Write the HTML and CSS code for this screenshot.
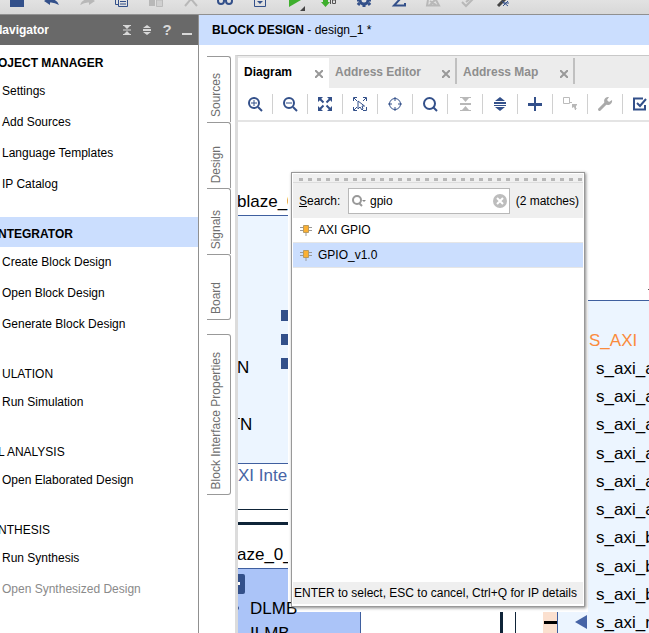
FILE: index.html
```html
<!DOCTYPE html>
<html lang="en">
<head>
<meta charset="utf-8">
<title>Block Design</title>
<link rel="stylesheet" href="styles.css">
</head>
<body>
<div class="app">
  <div class="main-toolbar" role="toolbar" aria-label="Main">
    <div class="main-tools">
      <button aria-label="Save"><svg width="20" height="14" viewBox="0 0 20 14"><path class="navy" d="M3 0h14v7H3z"/></svg></button>
      <button aria-label="Undo"><svg width="20" height="14" viewBox="0 0 20 14"><path class="navy" d="M2 1 8 -3V-1Q15-1 17 5Q12 2 8 2.500V5z"/></svg></button>
      <button aria-label="Redo"><svg width="20" height="14" viewBox="0 0 20 14"><path class="pale" d="M18 1 12 -3V-1Q5-1 3 5Q8 2 12 2.500V5z"/></svg></button>
      <button aria-label="Copy"><svg width="20" height="14" viewBox="0 0 20 14"><path class="line" d="M4.500 0v4.500H7M7.500-1v7.500h9V-1M9 1.500h6M9 4h6"/></svg></button>
      <button aria-label="Paste"><svg width="20" height="14" viewBox="0 0 20 14"><path class="pale" d="M3 0h6v6H3z"/><path d="M10.500 0h6v6.500h-6z" fill="#d0d0d0" stroke="#bbb"/></svg></button>
      <button aria-label="Delete"><svg width="20" height="14" viewBox="0 0 20 14"><path d="M4 6 10-1 16 6" fill="none" stroke="#b8b8b8" stroke-width="2"/></svg></button>
      <button aria-label="Find"><svg width="20" height="14" viewBox="0 0 20 14"><g class="line thick"><circle cx="6" cy="1" r="3"/><circle cx="14" cy="1" r="3"/><path d="M9 0h2"/></g></svg></button>
      <button aria-label="Open window"><svg width="20" height="14" viewBox="0 0 20 14"><path class="line" d="M4.500-1v7.500h11V-1"/><path class="navy" d="M7 1h6l-3 3z"/></svg></button>
      <button aria-label="Run"><svg width="20" height="14" viewBox="0 0 20 14"><path d="M4-4v11L16 0z" fill="#3faf2d"/><path d="M20 6v5h-5z" fill="#444"/></svg></button>
      <button aria-label="Generate bitstream"><svg width="20" height="14" viewBox="0 0 20 14"><path d="M4 0h5v2h2L6.500 7 2 2h2z" fill="#3faf2d"/><path d="M11.500 0v4M13.500 0h3v3.500h-3z" stroke="#555" fill="none"/></svg></button>
      <button aria-label="Settings"><svg width="20" height="14" viewBox="0 0 20 14"><circle cx="10" cy="0" r="4" fill="none" stroke="#33508a" stroke-width="3"/><path d="M10 4v3M5.500 3 4 5M14.500 3 16 5M3 0h2M15 0h2" stroke="#33508a" stroke-width="3"/></svg></button>
      <button aria-label="Report"><svg width="20" height="14" viewBox="0 0 20 14"><path d="M12-2 5 5.500h11V3" fill="none" stroke="#33508a" stroke-width="2"/></svg></button>
      <button aria-label="Report timing" disabled><svg width="20" height="14" viewBox="0 0 20 14"><path d="M5 0 4 5.500h12L13 0M7 5l6-6M7 1l6 4" fill="none" stroke="#b8b8b8" stroke-width="2"/></svg></button>
      <button aria-label="Edit" disabled><svg width="20" height="14" viewBox="0 0 20 14"><path d="M4 2 8 6 16-2M8 2l5-4" fill="none" stroke="#b8b8b8" stroke-width="2"/></svg></button>
      <button aria-label="Mark"><svg width="20" height="14" viewBox="0 0 20 14"><path d="M5 6 13-2" stroke="#444" stroke-width="3"/><path d="M9 1l6 5M15 1l-5 5M10 3h6" stroke="#33508a" fill="none"/></svg></button>
    </div>
  </div>

  <div class="workspace">
    <aside class="navigator">
      <header class="nav-head">
        <h2>Navigator</h2>
        <div class="nav-tools">
          <button aria-label="Collapse all"><svg width="10" height="12" viewBox="0 0 10 12"><path d="M1 1h8v1H1zM2 2h6L5 5zM1 5.500h8v1H1zM5 7l3 3H2zM1 10h8v1H1z"/></svg></button>
          <button aria-label="Expand all"><svg width="10" height="12" viewBox="0 0 10 12"><path d="M5 1l4 3H1zM1 5h8v2H1zM1 8h8l-4 3z"/></svg></button>
          <button class="help" aria-label="Help">?</button>
          <button aria-label="Minimize"><svg width="10" height="12" viewBox="0 0 10 12"><path d="M0 9h10v2H0z"/></svg></button>
        </div>
      </header>
      <nav>
        <section class="open"><h3>OJECT MANAGER</h3>
          <a href="#">Settings</a><a href="#">Add Sources</a><a href="#">Language Templates</a><a href="#">IP Catalog</a></section>
        <section class="open current"><h3>NTEGRATOR</h3>
          <a href="#">Create Block Design</a><a href="#">Open Block Design</a><a href="#">Generate Block Design</a></section>
        <section><h3 class="inset">ULATION</h3><a href="#">Run Simulation</a></section>
        <section><h3>L ANALYSIS</h3><a href="#">Open Elaborated Design</a></section>
        <section><h3>NTHESIS</h3><a href="#">Run Synthesis</a><a href="#" class="off">Open Synthesized Design</a></section>
      </nav>
    </aside>

    <main class="design">
      <h1><b>BLOCK DESIGN</b> - design_1 *</h1>
      <div class="design-body">
        <div class="side-tabs">
          <button>Sources</button>
          <button>Design</button>
          <button>Signals</button>
          <button>Board</button>
          <button class="wide">Block Interface Properties</button>
        </div>
        <div class="editor">
          <div class="tabs">
            <div class="tab active"><button>Diagram</button><button class="close" aria-label="Close Diagram"><svg width="8" height="8" viewBox="0 0 8 8"><path d="M0 0 8 8M8 0 0 8"/></svg></button></div>
            <div class="tab"><button>Address Editor</button><button class="close" aria-label="Close Address Editor"><svg width="8" height="8" viewBox="0 0 8 8"><path d="M0 0 8 8M8 0 0 8"/></svg></button></div>
            <div class="tab"><button>Address Map</button><button class="close" aria-label="Close Address Map"><svg width="8" height="8" viewBox="0 0 8 8"><path d="M0 0 8 8M8 0 0 8"/></svg></button></div>
          </div>
          <div class="canvas-tools">
            <button aria-label="Zoom in"><svg width="16" height="16" viewBox="0 0 16 16"><g class="line thick"><circle cx="7" cy="7" r="5"/><path d="M11 11l4 4"/></g><path class="line" d="M4 7h6M7 4v6"/></svg></button>
            <button aria-label="Zoom out"><svg width="16" height="16" viewBox="0 0 16 16"><g class="line thick"><circle cx="7" cy="7" r="5"/><path d="M11 11l4 4"/></g><path class="line" d="M4 7h6"/></svg></button>
            <button aria-label="Zoom fit"><svg width="16" height="16" viewBox="0 0 16 16"><path class="navy" d="M1 1h5L1 6zM15 1v5l-5-5zM1 15v-5l5 5zM15 15h-5l5-5z"/><path class="line thick" d="M3 3l3.500 3.500M13 3 9.500 6.500M3 13l3.500-3.500M13 13 9.500 9.500"/></svg></button>
            <button aria-label="Zoom to selection"><svg width="16" height="16" viewBox="0 0 16 16"><path class="line" d="M1.500 5V1.500H5M11 1.500h3.500V5M1.500 11v3.500H5M11 14.500h3.500V11M2 2l3 3M14 2l-3 3M2 14l3-3M6 5v8l2-2 2 3 1-1-1-3h2.500z"/></svg></button>
            <button aria-label="Center"><svg width="16" height="16" viewBox="0 0 16 16"><g class="line"><circle cx="8" cy="8" r="5.500"/><path d="M8 1v4M8 11v4M1 8h4M11 8h4"/></g></svg></button>
            <button aria-label="Search"><svg width="16" height="16" viewBox="0 0 16 16"><g class="line thick"><circle cx="7.500" cy="7.500" r="5.500"/><path d="M11 11l4 4"/></g></svg></button>
            <button aria-label="Collapse" disabled><svg width="16" height="16" viewBox="0 0 16 16"><path class="pale" d="M3 1h11v1H3zM5 2h7L8.500 6zM3 7h11v2H3zM8.500 10l3.500 4H5zM3 14h11v1H3z"/></svg></button>
            <button aria-label="Expand"><svg width="16" height="16" viewBox="0 0 16 16"><path class="navy" d="M8 1l5 4H3zM2 6h12v2H2zM2 9h12v1H2zM3 11h10l-5 4z"/></svg></button>
            <button aria-label="Add IP"><svg width="16" height="16" viewBox="0 0 16 16"><path class="navy" d="M7 1h2v6h6v3H9v5H7v-5H1V7h6z"/></svg></button>
            <button aria-label="Make external" disabled><svg width="16" height="16" viewBox="0 0 16 16"><path d="M1.500 1.500h6v6h-6zM8 6.500h2M11 9l3.500 4" fill="none" stroke="#bbb"/><path class="pale" d="M10 8h5v1l-1 1v4h-1l-1-3-2 1z"/></svg></button>
            <button aria-label="Customize" disabled><svg width="16" height="16" viewBox="0 0 16 16"><path d="M2.500 13.500 9 7" stroke="#aaa" stroke-width="3" stroke-linecap="round"/><path d="M12 1a4 4 0 1 0 3 3l-3 2-2-2z" fill="#aaa"/></svg></button>
            <button aria-label="Validate"><svg width="16" height="16" viewBox="0 0 16 16"><path class="line thick" d="M11 2.500H2v11h11V9M5 7l3 3 6-7"/></svg></button>
          </div>
          <div class="canvas">
            <svg class="diagram" role="img" aria-label="Diagram">
              <g transform="translate(-238 -122)">
                <rect x="200" y="215" width="160" height="248" fill="#ecf5ff"/>
                <path d="M230 215.500h120M230 463.500h120" stroke="#3f5f9f"/>
                <text x="237" y="207">blaze_0</text>
                <path class="navy" d="M281 310h12v11h-12zM281 334h12v11h-12zM281 358h12v11h-12z"/>
                <text x="237" y="373">N</text>
                <text x="240" y="430">N</text><path d="M238 418.500h2" stroke="#222"/>
                <text x="238" y="481" fill="#4664a6">XI Inte</text>
                <path d="M238 509.500h60" stroke="#0f2438"/>
                <path d="M238 523.500h60" stroke="#0f2438" stroke-width="3"/>
                <text x="237" y="560">aze_0_</text>
                <path d="M230 568.500h130.500V660H230z" fill="#abc4f8" stroke="#3f5f9f"/>
                <rect x="228" y="574" width="17" height="20" rx="2" fill="#33508a"/><path d="M236 583.500h4" stroke="#fff" stroke-width="3"/>
                <circle cx="237" cy="608" r="2" fill="#33508a"/>
                <path d="M501.500 600v40" stroke="#0f2438" stroke-width="3"/><path d="M515.500 600v40" stroke="#0f2438"/>
                <path d="M543 600h14v40h-14z" fill="#fbe0cf"/><path d="M544 622.500h13" stroke="#000" stroke-width="3"/>
                <path d="M557 300h1200v340H557z" fill="#ecf5ff"/><path d="M557.500 640V300.500H1700" fill="none" stroke="#3f5f9f"/>
                <path d="M648 289.500h6" stroke="#555"/>
                <path d="M288 171h300v441H288z" fill="#fff"/>
                <text x="250" y="614">DLMB</text>
                <text x="250" y="639">ILMB</text>
                <text class="bus" x="589" y="346">S_AXI</text>
                <g>
                  <text x="596" y="374">s_axi_a</text><text x="596" y="402">s_axi_a</text>
                  <text x="596" y="430">s_axi_a</text><text x="596" y="459">s_axi_a</text>
                  <text x="596" y="487">s_axi_a</text><text x="596" y="515">s_axi_a</text>
                  <text x="596" y="543">s_axi_b</text><text x="596" y="572">s_axi_b</text>
                  <text x="596" y="600">s_axi_b</text><text x="596" y="628">s_axi_r</text>
                </g>
                <path d="M575 622l12-7v14z" fill="#4664a6"/>
              </g>
            </svg>
          </div>
        </div>
      </div>
    </main>
  </div>
</div>

<div class="ip-popup" role="dialog" aria-label="Add IP">
  <div class="grip"></div>
  <div class="search-row">
    <label for="ip-search"><u>S</u>earch:</label>
    <div class="search-box">
      <svg width="16" height="14" viewBox="0 0 16 14"><g fill="none" stroke="#999" stroke-width="2"><circle cx="6" cy="6" r="4"/><path d="M8 9l3 3"/></g><path d="M11 6h4l-2 2z" fill="#888"/></svg>
      <input id="ip-search" type="text" value="gpio">
      <button aria-label="Clear"><svg width="14" height="14" viewBox="0 0 14 14"><circle cx="7" cy="7" r="7" fill="#bdbdbd"/><path d="M4 4l6 6M10 4l-6 6" stroke="#fff" stroke-width="2"/></svg></button>
    </div>
    <span>(2 matches)</span>
  </div>
  <ul>
    <li><svg width="12" height="12" viewBox="0 0 12 12"><path d="M0 3.500h12M0 6.500h12M6 8v4" stroke="#999"/><path d="M3.500 1.500h5v7h-5z" fill="#fbb033" stroke="#b89a60"/></svg>AXI GPIO</li>
    <li class="selected"><svg width="12" height="12" viewBox="0 0 12 12"><path d="M0 3.500h12M0 6.500h12M6 8v4" stroke="#999"/><path d="M3.500 1.500h5v7h-5z" fill="#fbb033" stroke="#b89a60"/></svg>GPIO_v1.0</li>
  </ul>
  <p>ENTER to select, ESC to cancel, Ctrl+Q for IP details</p>
</div>
</body>
</html>
```

FILE: styles.css
```css
* { box-sizing: border-box; }
body {
  margin: 0;
  background: #fff;
  color: #000;
  font: 12px/16px "Liberation Sans", Arial, sans-serif;
}
button {
  margin: 0;
  padding: 0;
  border: 0;
  background: none;
  color: inherit;
  font: inherit;
}
svg { display: block; }
h1, h2, h3, p, ul { margin: 0; padding: 0; font-size: 12px; font-weight: normal; }

.navy { fill: #33508a; }
.pale { fill: #b8b8b8; }
.line { fill: none; stroke: #33508a; }
.thick { stroke-width: 2; }

.app { display: flex; flex-direction: column; height: 100vh; overflow: hidden; }

.main-toolbar {
  flex: none;
  height: 15px;
  overflow: hidden;
  border-bottom: 1px solid #909090;
  background: linear-gradient(#e2e2e2, #d8d8d8);
}
.main-tools {
  display: grid;
  grid-template-columns: repeat(15, 1fr);
  justify-items: center;
  width: 520px;
}

.workspace { flex: 1; display: flex; min-height: 0; }

.navigator {
  flex: none;
  width: 199px;
  overflow: hidden;
  border-right: 1px solid #909090;
}
.nav-head {
  display: flex;
  justify-content: space-between;
  align-items: center;
  height: 30px;
  padding-right: 6px;
  background: #696969;
  color: #fff;
}
.nav-head h2 {
  display: flex;
  justify-content: flex-end;
  width: 49px;
  overflow: hidden;
  font-weight: bold;
}
.nav-tools { display: flex; align-items: center; gap: 10px; color: #d8d8d8; fill: #d8d8d8; }
.help { width: 10px; font-size: 15px; font-weight: bold; }

nav { display: flex; flex-direction: column; gap: 17px; padding-top: 1px; }
nav section { display: flex; flex-direction: column; }
nav h3 { height: 30px; padding-top: 3px; line-height: 28px; white-space: nowrap; text-indent: -2px; }
nav .inset { text-indent: 2px; }
nav .open h3 { font-weight: bold; }
nav .current h3 { background: #cbdefe; }
nav a { padding-left: 2px; color: #000; line-height: 31px; text-decoration: none; }
nav .off { color: #8a8a8a; }

.design { flex: 1; display: flex; flex-direction: column; min-width: 0; }
.design h1 { height: 30px; padding-left: 13px; background: #cbdefe; line-height: 30px; }
.design-body { flex: 1; display: flex; min-height: 0; padding-top: 10px; }

.side-tabs { flex: none; width: 36px; padding: 1px 4px 0 8px; }
.side-tabs button {
  display: block;
  width: 24px;
  height: 66px;
  padding: 2px 5px 5px 0;
  border: 1px solid #999;
  border-left: 0;
  border-bottom: 0;
  border-radius: 0 3px 0 0;
  color: #6e6e6e;
  writing-mode: sideways-lr;
  text-align: left;
}
.side-tabs button:nth-child(4) { border-bottom: 1px solid #999; border-radius: 0 3px 3px 0; }
.side-tabs .wide {
  height: 161px;
  margin-top: 14px;
  border-bottom: 1px solid #999;
  border-radius: 0 3px 3px 0;
}

.editor {
  flex: 1;
  display: flex;
  flex-direction: column;
  min-width: 0;
  border-top: 1px solid #c8c8c8;
  border-left: 3px solid #dcdcdc;
}
.tabs { display: flex; height: 32px; padding-top: 2px; background: #ececec; }
.tab {
  display: flex;
  align-items: center;
  justify-content: space-between;
  width: 118px;
  height: 26px;
  padding: 2px 5px 0 6px;
  border-right: 2px solid #c0c0c0;
  color: #8e8e8e;
  font-weight: bold;
}
.tab:nth-child(2) { width: 128px; }
.tab.active { width: 91px; height: 30px; padding: 0 6px 2px; border: 0; background: #fff; color: #000; }
.close { padding-top: 4px; }
.close path { stroke: #999; stroke-width: 2; }

.canvas-tools {
  display: flex;
  height: 34px;
  padding-top: 6px;
  overflow: hidden;
  border-bottom: 2px solid #e4e4e4;
}
.canvas-tools button {
  flex: none;
  display: grid;
  place-items: center;
  width: 35px;
  height: 20px;
  border-right: 1px solid #d0d0d0;
}

.canvas { flex: 1; min-height: 0; }
.diagram { width: 100%; height: 100%; overflow: hidden; }
.diagram text { font-size: 17px; }
.diagram .bus { fill: #fb8b3c; }

.ip-popup {
  position: absolute;
  top: 172px;
  left: 291px;
  display: flex;
  flex-direction: column;
  width: 294px;
  height: 435px;
  padding: 1px 1px 2px;
  border: 1px solid #999;
  background: #fff;
  box-shadow: 1px 1px 3px #888;
}
.grip {
  height: 9px;
  border-bottom: 1px solid #dcdcdc;
  background:
    repeating-linear-gradient(90deg, #b8b8b8 0 4px, transparent 4px 9px) 6px 4px / 100% 3px no-repeat,
    #f0f0f0;
}
.search-row {
  display: flex;
  align-items: center;
  gap: 6px;
  height: 35px;
  padding: 0 4px 0 6px;
  background: #efefef;
  white-space: nowrap;
}
.search-row label { width: 43px; }
.search-box {
  flex: 1;
  display: flex;
  align-items: center;
  height: 26px;
  min-width: 0;
  padding: 0 2px;
  border: 1px solid #b8b8b8;
  background: #fff;
}
.search-box input {
  flex: 1;
  min-width: 0;
  padding: 0 3px;
  border: 0;
  outline: 0;
  background: none;
  color: #000;
  font: inherit;
}
.ip-popup ul { flex: 1; list-style: none; }
.ip-popup li {
  display: flex;
  align-items: center;
  gap: 6px;
  height: 25px;
  padding-left: 7px;
  border-bottom: 1px solid #e6e6e6;
}
.ip-popup .selected { background: #cbdefe; }
.ip-popup p { padding-left: 1px; background: #efefef; line-height: 22px; white-space: nowrap; }
```
